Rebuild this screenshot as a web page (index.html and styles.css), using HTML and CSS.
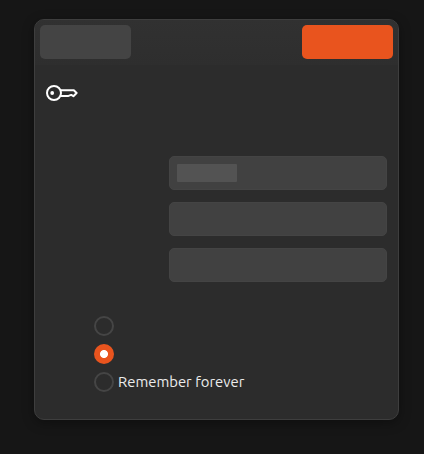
FILE: index.html
```html
<!DOCTYPE html>
<html lang="en">
<head>
<meta charset="utf-8">
<title>Authentication</title>
<link rel="stylesheet" href="styles.css">
</head>
<body>
<form class="dialog">
  <header class="header">
    <button type="button" class="button"></button>
    <button type="button" class="button primary"></button>
  </header>
  <svg class="key" viewBox="0 0 32 18" width="32" height="18">
    <circle cx="8" cy="9" r="7"/>
    <circle class="hole" cx="6.2" cy="9" r="1.9"/>
    <path d="M14.8 6.2H27.8L30.6 9L27.4 12.2L25.2 10.9L22.5 11.9H14.6"/>
  </svg>
  <div class="fields">
    <div class="field"><span class="value"></span></div>
    <div class="field"></div>
    <div class="field"></div>
  </div>
  <div class="options">
    <label class="option"><span class="radio"></span></label>
    <label class="option"><span class="radio checked"></span></label>
    <label class="option"><span class="radio"></span><span class="label">Remember forever</span></label>
  </div>
</form>
</body>
</html>
```
FILE: styles.css
```css
* { box-sizing: border-box; }
body {
  margin: 0;
  height: 454px;
  padding: 19px 25px 34px 34px;
  background: #161616;
  font-family: Ubuntu, "Noto Sans", sans-serif;
  overflow: hidden;
}
.dialog {
  width: 365px;
  height: 401px;
  background: #2c2c2c;
  border: 1px solid #3e3e3e;
  border-radius: 10px;
  box-shadow: 0 3px 12px rgba(0, 0, 0, .35);
  overflow: hidden;
}
.header {
  display: flex;
  justify-content: space-between;
  height: 45px;
  padding: 5px;
  background: linear-gradient(#313131, #2e2e2e);
}
.button {
  width: 91px;
  height: 34px;
  border: 0;
  border-radius: 5px;
  background: #444;
}
.primary { background: #e9541e; }
.key {
  display: block;
  margin: 19px 0 0 11px;
  fill: none;
  stroke: #fff;
  stroke-width: 2;
  stroke-linejoin: round;
}
.key .hole { fill: #fff; stroke: none; }
.fields {
  display: grid;
  gap: 12px;
  margin: 54px 11px 0 134px;
}
.field {
  height: 34px;
  padding: 7px;
  border: 1px solid #444;
  border-radius: 5px;
  background: #414141;
}
.value {
  display: block;
  width: 60px;
  height: 18px;
  border-radius: 1px;
  background: #535353;
}
.options {
  display: grid;
  gap: 8px;
  margin: 34px 0 0 59px;
}
.option {
  display: flex;
  align-items: center;
  gap: 4px;
  height: 20px;
}
.radio {
  width: 20px;
  height: 20px;
  border: 2px solid #454545;
  border-radius: 50%;
}
.checked {
  border: 0;
  background: radial-gradient(circle, #fff 3.6px, #e9541e 4.4px);
}
.label {
  color: #ececec;
  font-size: 14.85px;
  line-height: 20px;
  white-space: nowrap;
}
```
